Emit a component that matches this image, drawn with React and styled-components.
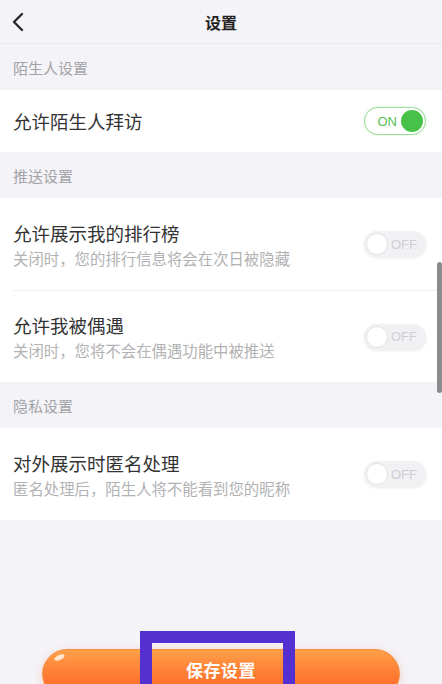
import React, { useState } from 'react';
import styled, { createGlobalStyle } from 'styled-components';

const GlobalStyle = createGlobalStyle`
  html, body {
    margin: 0;
    padding: 0;
    background: #f4f3f8;
    overflow: hidden;
  }
  * { box-sizing: border-box; }
`;

const sections = [
  {
    label: '陌生人设置',
    items: [{ key: 'visit', title: '允许陌生人拜访', on: true }],
  },
  {
    label: '推送设置',
    items: [
      { key: 'rank', title: '允许展示我的排行榜', desc: '关闭时，您的排行信息将会在次日被隐藏', on: false },
      { key: 'meet', title: '允许我被偶遇', desc: '关闭时，您将不会在偶遇功能中被推送', on: false },
    ],
  },
  {
    label: '隐私设置',
    items: [{ key: 'anon', title: '对外展示时匿名处理', desc: '匿名处理后，陌生人将不能看到您的昵称', on: false }],
  },
];

const App = () => {
  const [values, setValues] = useState(() => {
    const v = {};
    sections.forEach(s => s.items.forEach(i => { v[i.key] = i.on; }));
    return v;
  });

  const toggle = key => setValues(prev => ({ ...prev, [key]: !prev[key] }));

  return (
    <Page>
      <GlobalStyle />
      <Header>
        <BackButton aria-label="返回">
          <svg width="14" height="20" viewBox="0 0 14 20">
            <polyline points="11,2 3,10 11,18" fill="none" stroke="#2a2a2a" strokeWidth="2.4" strokeLinecap="round" strokeLinejoin="round" />
          </svg>
        </BackButton>
        <Title>设置</Title>
      </Header>

      {sections.map(section => (
        <React.Fragment key={section.label}>
          <SectionLabel>{section.label}</SectionLabel>
          <Group>
            {section.items.map(item => (
              <Row key={item.key} $tall={!!item.desc}>
                <TextBlock>
                  <RowTitle>{item.title}</RowTitle>
                  {item.desc && <RowDesc>{item.desc}</RowDesc>}
                </TextBlock>
                <Switch $on={values[item.key]} onClick={() => toggle(item.key)}>
                  {values[item.key] ? (
                    <>
                      <SwitchText $on>ON</SwitchText>
                      <Knob $on />
                    </>
                  ) : (
                    <>
                      <Knob />
                      <SwitchText>OFF</SwitchText>
                    </>
                  )}
                </Switch>
              </Row>
            ))}
          </Group>
        </React.Fragment>
      ))}

      <Footer>
        <SaveButton>
          <Shine />
          保存设置
        </SaveButton>
        <Highlight />
      </Footer>

      <ScrollThumb />
    </Page>
  );
};

export default App;

const Page = styled.div`
  position: relative;
  height: 684px;
  overflow: hidden;
  background: #f4f3f8;
  font-family: "Noto Sans CJK SC", "Noto Sans", sans-serif;
`;

const Header = styled.div`
  position: relative;
  height: 44px;
  display: flex;
  align-items: center;
  justify-content: center;
  border-bottom: 1px solid #ebeaef;
`;

const BackButton = styled.button`
  position: absolute;
  left: 11px;
  top: 12px;
  border: none;
  background: none;
  padding: 0;
  display: flex;
`;

const Title = styled.div`
  font-size: 16px;
  font-weight: 700;
  color: #222;
`;

const SectionLabel = styled.div`
  height: 46px;
  display: flex;
  align-items: center;
  padding-left: 13px;
  font-size: 15px;
  color: #a3a3a7;
`;

const Group = styled.div`
  background: #fff;
`;

const Row = styled.div`
  display: flex;
  align-items: center;
  justify-content: space-between;
  margin-left: 13px;
  padding-right: 16px;
  height: ${p => (p.$tall ? '92px' : '62px')};
  & + & {
    border-top: 1px solid #efeef2;
  }
`;

const TextBlock = styled.div`
  display: flex;
  flex-direction: column;
  gap: 3px;
`;

const RowTitle = styled.div`
  font-size: 18.5px;
  line-height: 24px;
  color: #333;
`;

const RowDesc = styled.div`
  font-size: 15.4px;
  line-height: 20px;
  color: #b2b2b4;
`;

const Switch = styled.div`
  width: 62px;
  height: ${p => (p.$on ? '28px' : '26px')};
  border-radius: 14px;
  display: flex;
  align-items: center;
  justify-content: ${p => (p.$on ? 'flex-end' : 'flex-start')};
  gap: 3px;
  padding: 0 2px;
  cursor: pointer;
  background: ${p => (p.$on ? '#fff' : '#f1f0f3')};
  border: ${p => (p.$on ? '1.5px solid #9cdc9c' : 'none')};
  box-shadow: ${p => (p.$on ? '0 0 2px rgba(76,196,76,0.3)' : '0 1px 3px rgba(0,0,0,0.08)')};
`;

const SwitchText = styled.span`
  font-family: "Liberation Sans", Arial, sans-serif;
  font-size: 13px;
  color: ${p => (p.$on ? '#53c253' : '#cfcfd2')};
  margin-right: ${p => (p.$on ? '1px' : '0')};
`;

const Knob = styled.span`
  width: 22px;
  height: 22px;
  border-radius: 50%;
  background: ${p => (p.$on ? '#47c147' : '#fff')};
  border: ${p => (p.$on ? 'none' : '1px solid #e3e2e6')};
`;

const Footer = styled.div`
  position: relative;
  display: flex;
  justify-content: center;
  margin-top: 129px;
`;

const SaveButton = styled.button`
  position: relative;
  width: 358px;
  height: 50px;
  border-radius: 25px;
  border: 1px solid #f39046;
  background: linear-gradient(180deg, #ffa048 0%, #ff7d34 50%, #ff6428 100%);
  box-shadow: 0 2px 8px rgba(255, 110, 40, 0.25);
  color: #fff;
  font-family: "Noto Sans CJK SC", sans-serif;
  font-size: 17px;
  font-weight: 700;
  letter-spacing: 0.5px;
  padding: 0 0 10px;
`;

const Shine = styled.span`
  position: absolute;
  left: 11px;
  top: 5px;
  width: 11px;
  height: 5px;
  border-radius: 50%;
  background: rgba(255, 255, 255, 0.75);
  transform: rotate(-25deg);
`;

const Highlight = styled.div`
  position: absolute;
  left: 140px;
  top: -18px;
  width: 155px;
  height: 80px;
  border: 12px solid #5330cf;
`;

const ScrollThumb = styled.div`
  position: absolute;
  right: 0;
  top: 262px;
  width: 5px;
  height: 131px;
  border-radius: 3px;
  background: #8c8c8e;
`;
